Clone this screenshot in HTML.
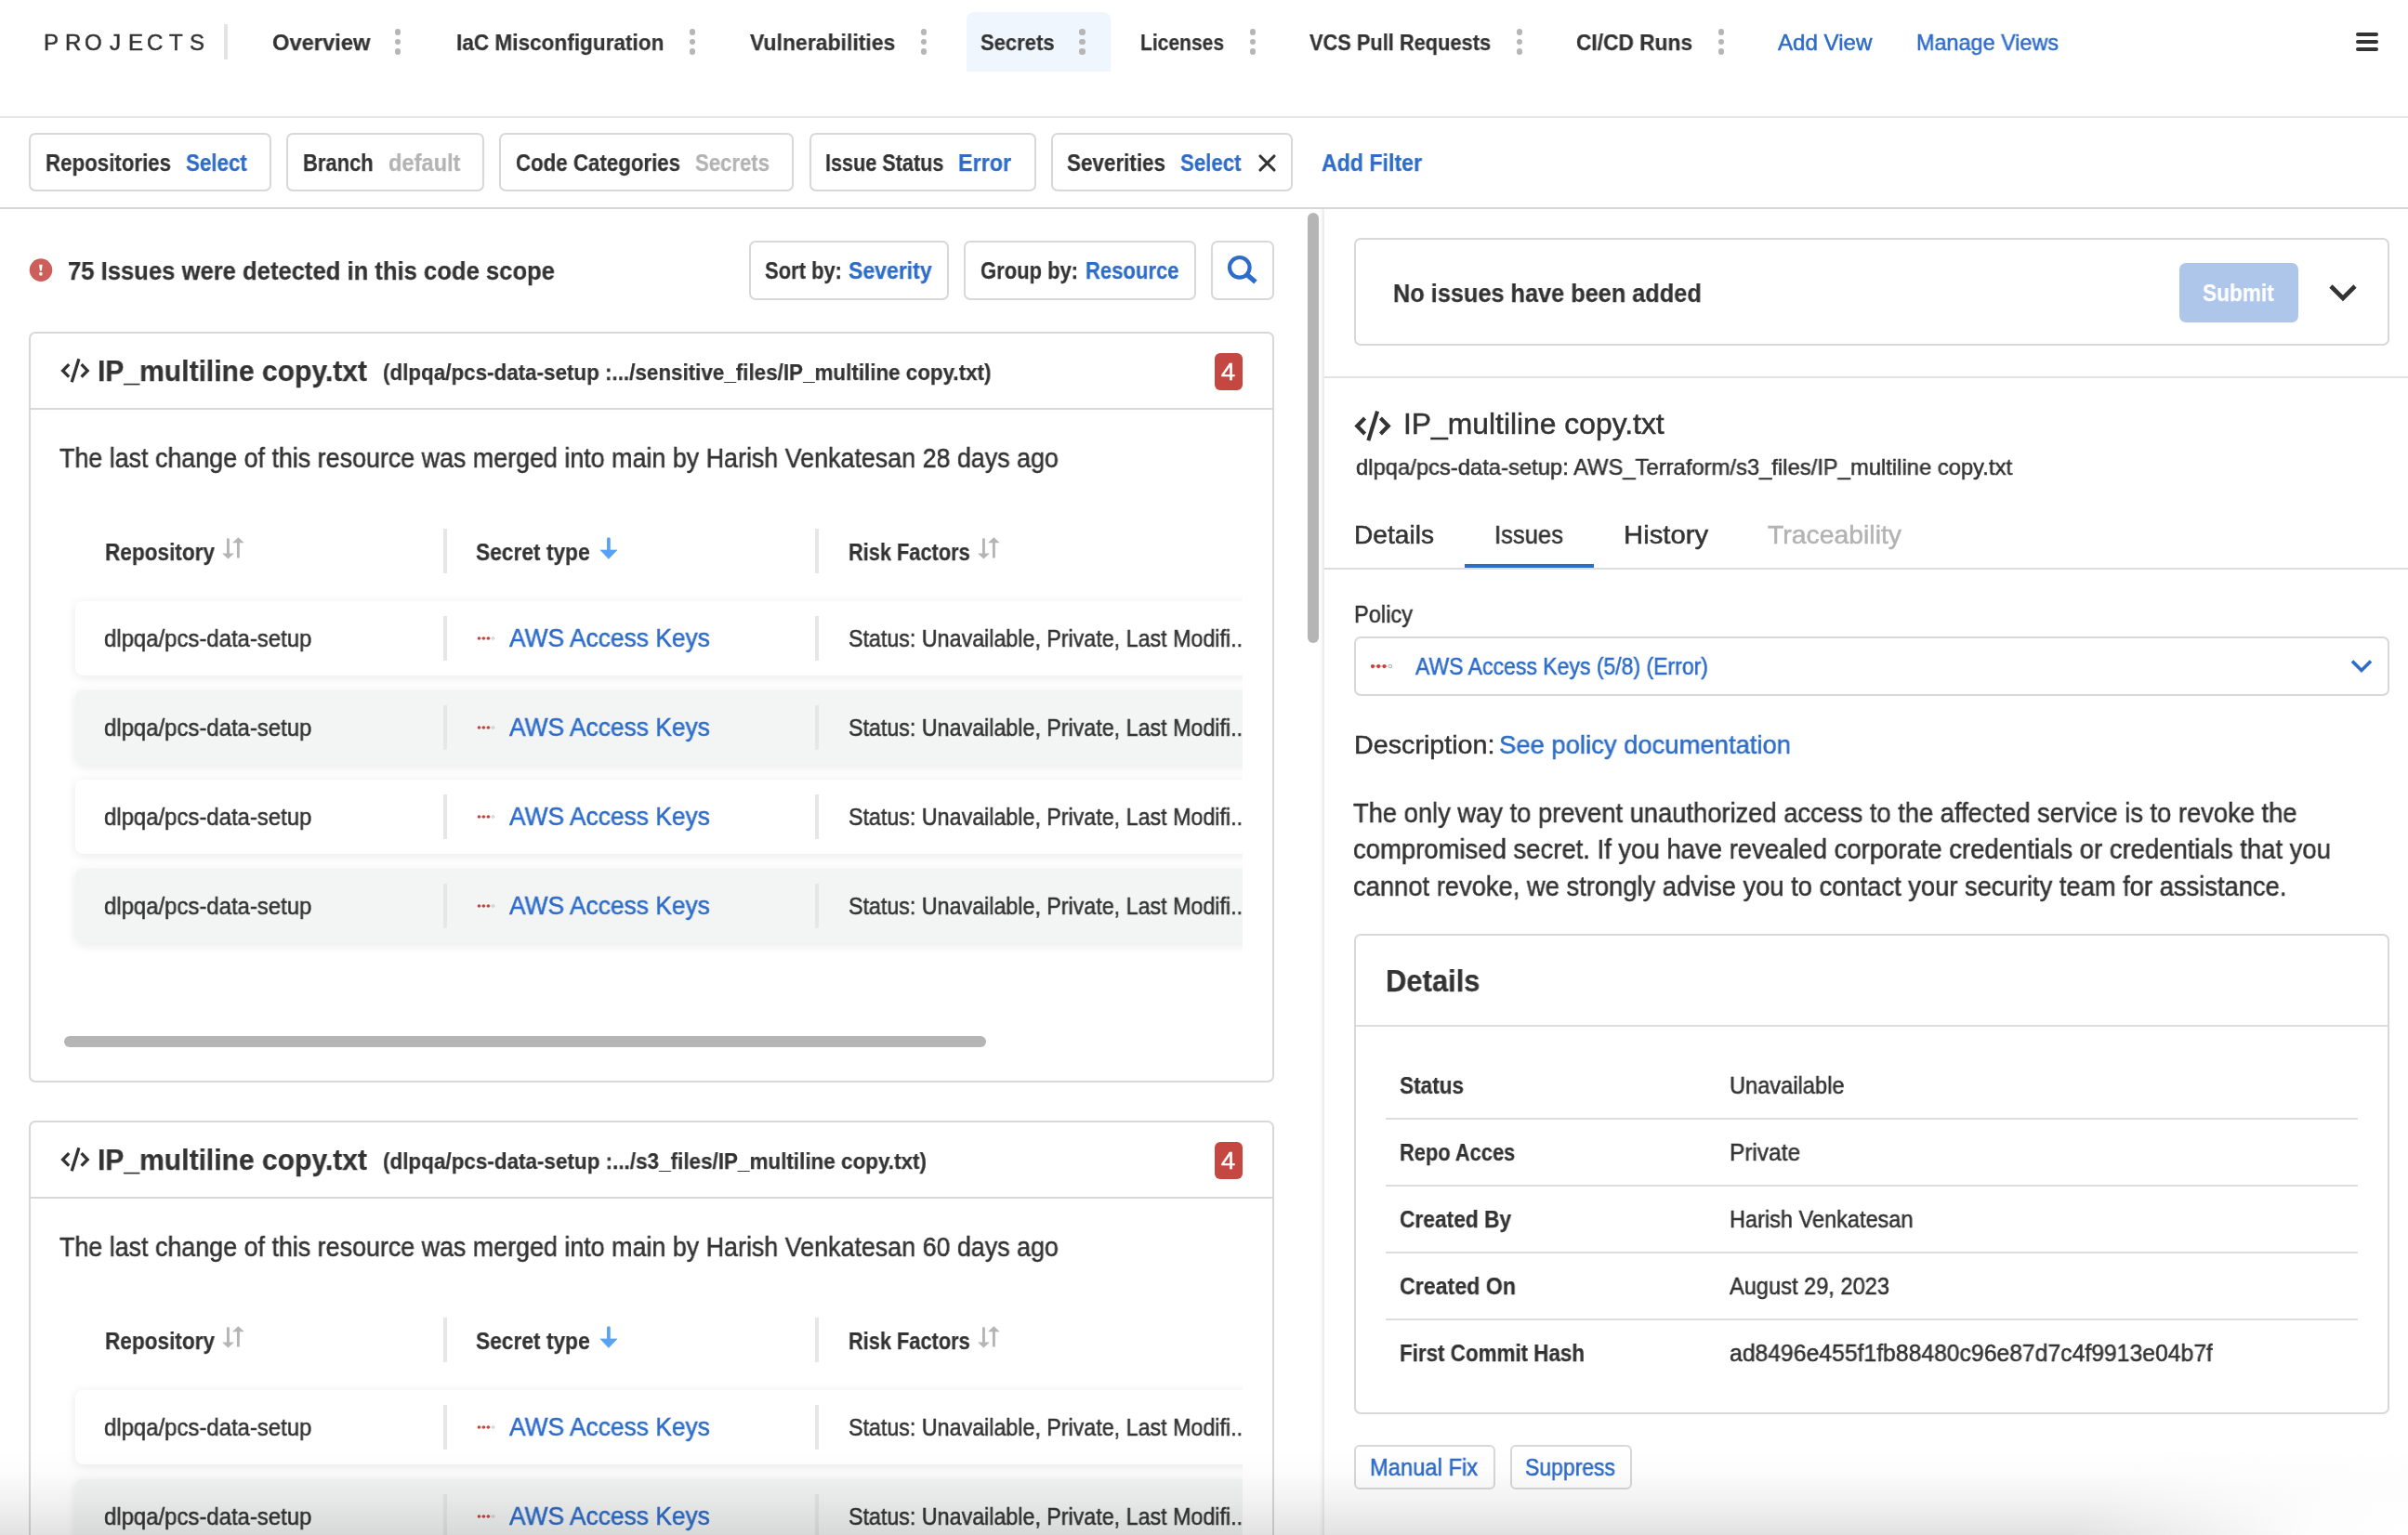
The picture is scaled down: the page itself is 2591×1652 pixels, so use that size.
<!DOCTYPE html>
<html><head><meta charset="utf-8"><title>Secrets</title>
<style>
html,body{margin:0;padding:0;background:#fff;}
body{width:2591px;height:1652px;position:relative;overflow:hidden;font-family:"Liberation Sans",sans-serif;}
.t{position:absolute;white-space:nowrap;line-height:1;transform-origin:0 0;will-change:transform;}
.b{position:absolute;}
svg.b{overflow:visible;}
</style></head><body>
<div class="b" style="left:1040px;top:13px;width:155px;height:64px;background:#f0f6fd;border-radius:8px 8px 0 0;"></div>
<div class="t" style="left:47.40px;top:33.68px;font-size:24px;color:#333333;-webkit-text-stroke:0.5px #333333;">P</div>
<div class="t" style="left:69.80px;top:33.68px;font-size:24px;color:#333333;-webkit-text-stroke:0.5px #333333;">R</div>
<div class="t" style="left:91.30px;top:33.68px;font-size:24px;color:#333333;-webkit-text-stroke:0.5px #333333;">O</div>
<div class="t" style="left:117.80px;top:33.68px;font-size:24px;color:#333333;-webkit-text-stroke:0.5px #333333;">J</div>
<div class="t" style="left:137.50px;top:33.68px;font-size:24px;color:#333333;-webkit-text-stroke:0.5px #333333;">E</div>
<div class="t" style="left:158.10px;top:33.68px;font-size:24px;color:#333333;-webkit-text-stroke:0.5px #333333;">C</div>
<div class="t" style="left:181.50px;top:33.68px;font-size:24px;color:#333333;-webkit-text-stroke:0.5px #333333;">T</div>
<div class="t" style="left:203.80px;top:33.68px;font-size:24px;color:#333333;-webkit-text-stroke:0.5px #333333;">S</div>
<div class="b" style="left:241px;top:26px;width:4px;height:38px;background:#e4e4e4;"></div>
<div class="t" style="left:292.50px;top:33.68px;font-size:24px;color:#333333;font-weight:700;-webkit-text-stroke:0.25px #333333;transform:scaleX(0.9878);">Overview</div>
<div class="b" style="left:424.7px;top:31.099999999999998px;width:6.600000000000023px;height:6.599999999999998px;background:#b6b6b6;border-radius:50%;"></div>
<div class="b" style="left:424.7px;top:41.6px;width:6.600000000000023px;height:6.599999999999994px;background:#b6b6b6;border-radius:50%;"></div>
<div class="b" style="left:424.7px;top:52.1px;width:6.600000000000023px;height:6.599999999999994px;background:#b6b6b6;border-radius:50%;"></div>
<div class="t" style="left:490.60px;top:33.68px;font-size:24px;color:#333333;font-weight:700;-webkit-text-stroke:0.25px #333333;transform:scaleX(0.9412);">IaC Misconfiguration</div>
<div class="b" style="left:741.7px;top:31.099999999999998px;width:6.599999999999909px;height:6.599999999999998px;background:#b6b6b6;border-radius:50%;"></div>
<div class="b" style="left:741.7px;top:41.6px;width:6.599999999999909px;height:6.599999999999994px;background:#b6b6b6;border-radius:50%;"></div>
<div class="b" style="left:741.7px;top:52.1px;width:6.599999999999909px;height:6.599999999999994px;background:#b6b6b6;border-radius:50%;"></div>
<div class="t" style="left:806.60px;top:33.68px;font-size:24px;color:#333333;font-weight:700;-webkit-text-stroke:0.25px #333333;transform:scaleX(0.9583);">Vulnerabilities</div>
<div class="b" style="left:990.7px;top:31.099999999999998px;width:6.599999999999909px;height:6.599999999999998px;background:#b6b6b6;border-radius:50%;"></div>
<div class="b" style="left:990.7px;top:41.6px;width:6.599999999999909px;height:6.599999999999994px;background:#b6b6b6;border-radius:50%;"></div>
<div class="b" style="left:990.7px;top:52.1px;width:6.599999999999909px;height:6.599999999999994px;background:#b6b6b6;border-radius:50%;"></div>
<div class="t" style="left:1055.00px;top:33.68px;font-size:24px;color:#333333;font-weight:700;-webkit-text-stroke:0.25px #333333;transform:scaleX(0.9163);">Secrets</div>
<div class="b" style="left:1161.2px;top:31.099999999999998px;width:6.599999999999909px;height:6.599999999999998px;background:#b6b6b6;border-radius:50%;"></div>
<div class="b" style="left:1161.2px;top:41.6px;width:6.599999999999909px;height:6.599999999999994px;background:#b6b6b6;border-radius:50%;"></div>
<div class="b" style="left:1161.2px;top:52.1px;width:6.599999999999909px;height:6.599999999999994px;background:#b6b6b6;border-radius:50%;"></div>
<div class="t" style="left:1227.00px;top:33.68px;font-size:24px;color:#333333;font-weight:700;-webkit-text-stroke:0.25px #333333;transform:scaleX(0.8762);">Licenses</div>
<div class="b" style="left:1344.7px;top:31.099999999999998px;width:6.599999999999909px;height:6.599999999999998px;background:#b6b6b6;border-radius:50%;"></div>
<div class="b" style="left:1344.7px;top:41.6px;width:6.599999999999909px;height:6.599999999999994px;background:#b6b6b6;border-radius:50%;"></div>
<div class="b" style="left:1344.7px;top:52.1px;width:6.599999999999909px;height:6.599999999999994px;background:#b6b6b6;border-radius:50%;"></div>
<div class="t" style="left:1409.00px;top:33.68px;font-size:24px;color:#333333;font-weight:700;-webkit-text-stroke:0.25px #333333;transform:scaleX(0.9083);">VCS Pull Requests</div>
<div class="b" style="left:1631.7px;top:31.099999999999998px;width:6.599999999999909px;height:6.599999999999998px;background:#b6b6b6;border-radius:50%;"></div>
<div class="b" style="left:1631.7px;top:41.6px;width:6.599999999999909px;height:6.599999999999994px;background:#b6b6b6;border-radius:50%;"></div>
<div class="b" style="left:1631.7px;top:52.1px;width:6.599999999999909px;height:6.599999999999994px;background:#b6b6b6;border-radius:50%;"></div>
<div class="t" style="left:1696.00px;top:33.68px;font-size:24px;color:#333333;font-weight:700;-webkit-text-stroke:0.25px #333333;transform:scaleX(0.9470);">CI/CD Runs</div>
<div class="b" style="left:1848.7px;top:31.099999999999998px;width:6.599999999999909px;height:6.599999999999998px;background:#b6b6b6;border-radius:50%;"></div>
<div class="b" style="left:1848.7px;top:41.6px;width:6.599999999999909px;height:6.599999999999994px;background:#b6b6b6;border-radius:50%;"></div>
<div class="b" style="left:1848.7px;top:52.1px;width:6.599999999999909px;height:6.599999999999994px;background:#b6b6b6;border-radius:50%;"></div>
<div class="t" style="left:1913.00px;top:33.68px;font-size:24px;color:#2d6cc8;-webkit-text-stroke:0.5px #2d6cc8;transform:scaleX(1.0046);">Add View</div>
<div class="t" style="left:2062.00px;top:33.68px;font-size:24px;color:#2d6cc8;-webkit-text-stroke:0.5px #2d6cc8;transform:scaleX(0.9748);">Manage Views</div>
<div class="b" style="left:2535px;top:35px;width:24px;height:4px;background:#333;border-radius:2px;"></div>
<div class="b" style="left:2535px;top:43px;width:24px;height:4px;background:#333;border-radius:2px;"></div>
<div class="b" style="left:2535px;top:51px;width:24px;height:4px;background:#333;border-radius:2px;"></div>
<div class="b" style="left:0px;top:125px;width:2591px;height:2px;background:#e6e7e7;"></div>
<div class="b" style="left:31px;top:143px;width:261px;height:63px;border:2px solid #d7d8d8;border-radius:7px;box-sizing:border-box;"></div>
<div class="t" style="left:48.80px;top:163.23px;font-size:25px;color:#333333;font-weight:700;-webkit-text-stroke:0.25px #333333;transform:scaleX(0.8918);">Repositories</div>
<div class="t" style="left:199.60px;top:163.23px;font-size:25px;color:#2d6cc8;font-weight:700;-webkit-text-stroke:0.25px #2d6cc8;transform:scaleX(0.8937);">Select</div>
<div class="b" style="left:308px;top:143px;width:213px;height:63px;border:2px solid #d7d8d8;border-radius:7px;box-sizing:border-box;"></div>
<div class="t" style="left:326.00px;top:163.23px;font-size:25px;color:#333333;font-weight:700;-webkit-text-stroke:0.25px #333333;transform:scaleX(0.8790);">Branch</div>
<div class="t" style="left:417.60px;top:163.23px;font-size:25px;color:#b3b3b3;font-weight:700;-webkit-text-stroke:0.25px #b3b3b3;transform:scaleX(0.9451);">default</div>
<div class="b" style="left:537px;top:143px;width:317px;height:63px;border:2px solid #d7d8d8;border-radius:7px;box-sizing:border-box;"></div>
<div class="t" style="left:555.00px;top:163.23px;font-size:25px;color:#333333;font-weight:700;-webkit-text-stroke:0.25px #333333;transform:scaleX(0.8911);">Code Categories</div>
<div class="t" style="left:748.00px;top:163.23px;font-size:25px;color:#b3b3b3;font-weight:700;-webkit-text-stroke:0.25px #b3b3b3;transform:scaleX(0.8852);">Secrets</div>
<div class="b" style="left:871px;top:143px;width:244px;height:63px;border:2px solid #d7d8d8;border-radius:7px;box-sizing:border-box;"></div>
<div class="t" style="left:888.00px;top:163.23px;font-size:25px;color:#333333;font-weight:700;-webkit-text-stroke:0.25px #333333;transform:scaleX(0.8659);">Issue Status</div>
<div class="t" style="left:1031.00px;top:163.23px;font-size:25px;color:#2d6cc8;font-weight:700;-webkit-text-stroke:0.25px #2d6cc8;transform:scaleX(0.9325);">Error</div>
<div class="b" style="left:1131px;top:143px;width:260px;height:63px;border:2px solid #d7d8d8;border-radius:7px;box-sizing:border-box;"></div>
<div class="t" style="left:1148.00px;top:163.23px;font-size:25px;color:#333333;font-weight:700;-webkit-text-stroke:0.25px #333333;transform:scaleX(0.8974);">Severities</div>
<div class="t" style="left:1270.00px;top:163.23px;font-size:25px;color:#2d6cc8;font-weight:700;-webkit-text-stroke:0.25px #2d6cc8;transform:scaleX(0.8896);">Select</div>
<svg class="b" style="left:1350px;top:162px" width="26" height="26" viewBox="0 0 26 26"><path d="M6 6L21 21M21 6L6 21" stroke="#333" stroke-width="3.1" stroke-linecap="round"/></svg>
<div class="t" style="left:1422.00px;top:163.23px;font-size:25px;color:#2d6cc8;font-weight:700;-webkit-text-stroke:0.25px #2d6cc8;transform:scaleX(0.9260);">Add Filter</div>
<div class="b" style="left:0px;top:223px;width:2591px;height:2px;background:#d5d7d7;"></div>
<svg class="b" style="left:31px;top:278px" width="26" height="26" viewBox="0 0 26 26"><circle cx="13" cy="12.6" r="12.3" fill="#cd5f5a"/><path d="M11.2 6.8h3.4l-0.7 6.8h-2z" fill="#fff"/><rect x="11.3" y="15" width="3.2" height="3.6" rx="0.8" fill="#fff"/></svg>
<div class="t" style="left:72.50px;top:278.29px;font-size:28px;color:#333333;font-weight:700;-webkit-text-stroke:0.25px #333333;transform:scaleX(0.9149);">75 Issues were detected in this code scope</div>
<div class="b" style="left:806px;top:259px;width:215px;height:64px;border:2px solid #d7d8d8;border-radius:7px;box-sizing:border-box;"></div>
<div class="t" style="left:823.00px;top:278.83px;font-size:25px;color:#333333;font-weight:700;-webkit-text-stroke:0.25px #333333;transform:scaleX(0.8783);">Sort by:</div>
<div class="t" style="left:913.00px;top:278.83px;font-size:25px;color:#2d6cc8;font-weight:700;-webkit-text-stroke:0.25px #2d6cc8;transform:scaleX(0.9213);">Severity</div>
<div class="b" style="left:1037px;top:259px;width:250px;height:64px;border:2px solid #d7d8d8;border-radius:7px;box-sizing:border-box;"></div>
<div class="t" style="left:1054.50px;top:278.83px;font-size:25px;color:#333333;font-weight:700;-webkit-text-stroke:0.25px #333333;transform:scaleX(0.8796);">Group by:</div>
<div class="t" style="left:1168.00px;top:278.83px;font-size:25px;color:#2d6cc8;font-weight:700;-webkit-text-stroke:0.25px #2d6cc8;transform:scaleX(0.8816);">Resource</div>
<div class="b" style="left:1303px;top:259px;width:68px;height:64px;border:2px solid #d7d8d8;border-radius:7px;box-sizing:border-box;"></div>
<svg class="b" style="left:1316px;top:270px" width="42" height="42" viewBox="0 0 42 42"><circle cx="17.8" cy="17.8" r="10.8" fill="none" stroke="#2d6cc8" stroke-width="4.2"/><path d="M25 25L35 33.5" stroke="#2d6cc8" stroke-width="5.2" stroke-linecap="butt"/></svg>
<div class="b" style="left:31px;top:357px;width:1340px;height:808px;border:2px solid #d7d8d8;border-radius:7px;box-sizing:border-box;"></div>
<svg class="b" style="left:65px;top:385px" width="34.0" height="30.0" viewBox="0 0 34 30"><path d="M9.2 7.2L2.6 13.9L9.2 20.6M22.6 7.2L29.2 13.9L22.6 20.6" fill="none" stroke="#333" stroke-width="3.3" stroke-linecap="butt" stroke-linejoin="miter"/><path d="M19.9 1.2L12.2 26.3" stroke="#333" stroke-width="3.3"/></svg>
<div class="t" style="left:105.00px;top:383.75px;font-size:31px;color:#333333;font-weight:700;-webkit-text-stroke:0.25px #333333;transform:scaleX(0.9694);">IP_multiline copy.txt</div>
<div class="t" style="left:412.00px;top:388.68px;font-size:24px;color:#333333;font-weight:700;-webkit-text-stroke:0.25px #333333;transform:scaleX(0.9336);">(dlpqa/pcs-data-setup :.../sensitive_files/IP_multiline copy.txt)</div>
<div class="b" style="left:1307px;top:380px;width:30px;height:40px;background:#c44741;border-radius:6px;"></div>
<div class="t" style="left:1314.00px;top:387.83px;font-size:25px;color:#ffffff;-webkit-text-stroke:0.5px #ffffff;transform:scaleX(1.0811);">4</div>
<div class="b" style="left:33px;top:439px;width:1336px;height:2px;background:#d7d8d8;"></div>
<div class="t" style="left:64.40px;top:479.45px;font-size:29px;color:#333333;-webkit-text-stroke:0.5px #333333;transform:scaleX(0.9261);">The last change of this resource was merged into main by Harish Venkatesan 28 days ago</div>
<div class="t" style="left:113.00px;top:581.63px;font-size:25px;color:#333333;font-weight:700;-webkit-text-stroke:0.25px #333333;transform:scaleX(0.9033);">Repository</div>
<svg class="b" style="left:238px;top:577px" width="28" height="28" viewBox="0 0 28 28"><path d="M7.45 2.4V19" stroke="#b5b5b5" stroke-width="2.9"/><path d="M1 18.5H13.9L7.45 24.6z" fill="#b5b5b5"/><path d="M18.4 7V23.5" stroke="#b5b5b5" stroke-width="2.9"/><path d="M12 7.3H24.7L18.35 1.3z" fill="#b5b5b5"/></svg>
<div class="b" style="left:477px;top:569px;width:4px;height:48px;background:#e6e6e6;"></div>
<div class="t" style="left:512.00px;top:581.63px;font-size:25px;color:#333333;font-weight:700;-webkit-text-stroke:0.25px #333333;transform:scaleX(0.9098);">Secret type</div>
<svg class="b" style="left:645px;top:578px" width="22" height="26" viewBox="0 0 22 26"><path d="M9.9 2.2V15" stroke="#58a2f4" stroke-width="3.7" stroke-linecap="round"/><path d="M0.9 13.9H19L9.9 23.6z" fill="#58a2f4" stroke="#58a2f4" stroke-width="0.6" stroke-linejoin="round"/></svg>
<div class="b" style="left:877px;top:569px;width:4px;height:48px;background:#e6e6e6;"></div>
<div class="t" style="left:912.60px;top:581.63px;font-size:25px;color:#333333;font-weight:700;-webkit-text-stroke:0.25px #333333;transform:scaleX(0.8706);">Risk Factors</div>
<svg class="b" style="left:1051px;top:577px" width="28" height="28" viewBox="0 0 28 28"><path d="M7.45 2.4V19" stroke="#b5b5b5" stroke-width="2.9"/><path d="M1 18.5H13.9L7.45 24.6z" fill="#b5b5b5"/><path d="M18.4 7V23.5" stroke="#b5b5b5" stroke-width="2.9"/><path d="M12 7.3H24.7L18.35 1.3z" fill="#b5b5b5"/></svg>
<div class="b" style="left:60px;top:630px;width:1277px;height:420px;overflow:hidden;">
<div class="b" style="left:21px;top:17px;width:1300px;height:80px;background:#ffffff;border-radius:8px;box-shadow:0 2px 12px rgba(0,0,0,0.09);"></div>
<div class="b" style="left:21px;top:113px;width:1300px;height:80px;background:#f3f4f4;border-radius:8px;box-shadow:0 2px 12px rgba(0,0,0,0.09);"></div>
<div class="b" style="left:21px;top:209px;width:1300px;height:80px;background:#ffffff;border-radius:8px;box-shadow:0 2px 12px rgba(0,0,0,0.09);"></div>
<div class="b" style="left:21px;top:305px;width:1300px;height:80px;background:#f3f4f4;border-radius:8px;box-shadow:0 2px 12px rgba(0,0,0,0.09);"></div>
</div>
<div class="t" style="left:112.40px;top:674.83px;font-size:25px;color:#333333;-webkit-text-stroke:0.5px #333333;transform:scaleX(0.9567);">dlpqa/pcs-data-setup</div>
<div class="b" style="left:477px;top:663px;width:4px;height:48px;background:#e6e6e6;"></div>
<svg class="b" style="left:513px;top:683.00px" width="22.0" height="8.0" viewBox="0 0 22 8"><path d="M2.4 4H15" stroke="#e9b5b0" stroke-width="1.2"/><circle cx="2.4" cy="4" r="1.7" fill="#c3433b"/><circle cx="7.4" cy="4" r="1.7" fill="#c3433b"/><circle cx="12.4" cy="4" r="1.7" fill="#c3433b"/><circle cx="17.5" cy="4" r="1.35" fill="none" stroke="#b8b8b8" stroke-width="0.9"/></svg>
<div class="t" style="left:548.40px;top:674.14px;font-size:27px;color:#2d6cc8;-webkit-text-stroke:0.5px #2d6cc8;transform:scaleX(0.9768);">AWS Access Keys</div>
<div class="b" style="left:877px;top:663px;width:4px;height:48px;background:#e6e6e6;"></div>
<div class="t" style="left:912.60px;top:674.83px;font-size:25px;color:#333333;-webkit-text-stroke:0.5px #333333;transform:scaleX(0.9303);">Status: Unavailable, Private, Last Modifi..</div>
<div class="t" style="left:112.40px;top:770.83px;font-size:25px;color:#333333;-webkit-text-stroke:0.5px #333333;transform:scaleX(0.9567);">dlpqa/pcs-data-setup</div>
<div class="b" style="left:477px;top:759px;width:4px;height:48px;background:#e6e6e6;"></div>
<svg class="b" style="left:513px;top:779.00px" width="22.0" height="8.0" viewBox="0 0 22 8"><path d="M2.4 4H15" stroke="#e9b5b0" stroke-width="1.2"/><circle cx="2.4" cy="4" r="1.7" fill="#c3433b"/><circle cx="7.4" cy="4" r="1.7" fill="#c3433b"/><circle cx="12.4" cy="4" r="1.7" fill="#c3433b"/><circle cx="17.5" cy="4" r="1.35" fill="none" stroke="#b8b8b8" stroke-width="0.9"/></svg>
<div class="t" style="left:548.40px;top:770.14px;font-size:27px;color:#2d6cc8;-webkit-text-stroke:0.5px #2d6cc8;transform:scaleX(0.9768);">AWS Access Keys</div>
<div class="b" style="left:877px;top:759px;width:4px;height:48px;background:#e6e6e6;"></div>
<div class="t" style="left:912.60px;top:770.83px;font-size:25px;color:#333333;-webkit-text-stroke:0.5px #333333;transform:scaleX(0.9303);">Status: Unavailable, Private, Last Modifi..</div>
<div class="t" style="left:112.40px;top:866.83px;font-size:25px;color:#333333;-webkit-text-stroke:0.5px #333333;transform:scaleX(0.9567);">dlpqa/pcs-data-setup</div>
<div class="b" style="left:477px;top:855px;width:4px;height:48px;background:#e6e6e6;"></div>
<svg class="b" style="left:513px;top:875.00px" width="22.0" height="8.0" viewBox="0 0 22 8"><path d="M2.4 4H15" stroke="#e9b5b0" stroke-width="1.2"/><circle cx="2.4" cy="4" r="1.7" fill="#c3433b"/><circle cx="7.4" cy="4" r="1.7" fill="#c3433b"/><circle cx="12.4" cy="4" r="1.7" fill="#c3433b"/><circle cx="17.5" cy="4" r="1.35" fill="none" stroke="#b8b8b8" stroke-width="0.9"/></svg>
<div class="t" style="left:548.40px;top:866.14px;font-size:27px;color:#2d6cc8;-webkit-text-stroke:0.5px #2d6cc8;transform:scaleX(0.9768);">AWS Access Keys</div>
<div class="b" style="left:877px;top:855px;width:4px;height:48px;background:#e6e6e6;"></div>
<div class="t" style="left:912.60px;top:866.83px;font-size:25px;color:#333333;-webkit-text-stroke:0.5px #333333;transform:scaleX(0.9303);">Status: Unavailable, Private, Last Modifi..</div>
<div class="t" style="left:112.40px;top:962.83px;font-size:25px;color:#333333;-webkit-text-stroke:0.5px #333333;transform:scaleX(0.9567);">dlpqa/pcs-data-setup</div>
<div class="b" style="left:477px;top:951px;width:4px;height:48px;background:#e6e6e6;"></div>
<svg class="b" style="left:513px;top:971.00px" width="22.0" height="8.0" viewBox="0 0 22 8"><path d="M2.4 4H15" stroke="#e9b5b0" stroke-width="1.2"/><circle cx="2.4" cy="4" r="1.7" fill="#c3433b"/><circle cx="7.4" cy="4" r="1.7" fill="#c3433b"/><circle cx="12.4" cy="4" r="1.7" fill="#c3433b"/><circle cx="17.5" cy="4" r="1.35" fill="none" stroke="#b8b8b8" stroke-width="0.9"/></svg>
<div class="t" style="left:548.40px;top:962.14px;font-size:27px;color:#2d6cc8;-webkit-text-stroke:0.5px #2d6cc8;transform:scaleX(0.9768);">AWS Access Keys</div>
<div class="b" style="left:877px;top:951px;width:4px;height:48px;background:#e6e6e6;"></div>
<div class="t" style="left:912.60px;top:962.83px;font-size:25px;color:#333333;-webkit-text-stroke:0.5px #333333;transform:scaleX(0.9303);">Status: Unavailable, Private, Last Modifi..</div>
<div class="b" style="left:69px;top:1115px;width:992px;height:12px;background:#b5b5b5;border-radius:6px;"></div>
<div class="b" style="left:31px;top:1206px;width:1340px;height:1194px;border:2px solid #d7d8d8;border-radius:7px;box-sizing:border-box;"></div>
<svg class="b" style="left:65px;top:1234px" width="34.0" height="30.0" viewBox="0 0 34 30"><path d="M9.2 7.2L2.6 13.9L9.2 20.6M22.6 7.2L29.2 13.9L22.6 20.6" fill="none" stroke="#333" stroke-width="3.3" stroke-linecap="butt" stroke-linejoin="miter"/><path d="M19.9 1.2L12.2 26.3" stroke="#333" stroke-width="3.3"/></svg>
<div class="t" style="left:105.00px;top:1232.75px;font-size:31px;color:#333333;font-weight:700;-webkit-text-stroke:0.25px #333333;transform:scaleX(0.9694);">IP_multiline copy.txt</div>
<div class="t" style="left:412.00px;top:1237.68px;font-size:24px;color:#333333;font-weight:700;-webkit-text-stroke:0.25px #333333;transform:scaleX(0.9359);">(dlpqa/pcs-data-setup :.../s3_files/IP_multiline copy.txt)</div>
<div class="b" style="left:1307px;top:1229px;width:30px;height:40px;background:#c44741;border-radius:6px;"></div>
<div class="t" style="left:1314.00px;top:1236.83px;font-size:25px;color:#ffffff;-webkit-text-stroke:0.5px #ffffff;transform:scaleX(1.0811);">4</div>
<div class="b" style="left:33px;top:1288px;width:1336px;height:2px;background:#d7d8d8;"></div>
<div class="t" style="left:64.40px;top:1328.45px;font-size:29px;color:#333333;-webkit-text-stroke:0.5px #333333;transform:scaleX(0.9261);">The last change of this resource was merged into main by Harish Venkatesan 60 days ago</div>
<div class="t" style="left:113.00px;top:1430.63px;font-size:25px;color:#333333;font-weight:700;-webkit-text-stroke:0.25px #333333;transform:scaleX(0.9033);">Repository</div>
<svg class="b" style="left:238px;top:1426px" width="28" height="28" viewBox="0 0 28 28"><path d="M7.45 2.4V19" stroke="#b5b5b5" stroke-width="2.9"/><path d="M1 18.5H13.9L7.45 24.6z" fill="#b5b5b5"/><path d="M18.4 7V23.5" stroke="#b5b5b5" stroke-width="2.9"/><path d="M12 7.3H24.7L18.35 1.3z" fill="#b5b5b5"/></svg>
<div class="b" style="left:477px;top:1418px;width:4px;height:48px;background:#e6e6e6;"></div>
<div class="t" style="left:512.00px;top:1430.63px;font-size:25px;color:#333333;font-weight:700;-webkit-text-stroke:0.25px #333333;transform:scaleX(0.9098);">Secret type</div>
<svg class="b" style="left:645px;top:1427px" width="22" height="26" viewBox="0 0 22 26"><path d="M9.9 2.2V15" stroke="#58a2f4" stroke-width="3.7" stroke-linecap="round"/><path d="M0.9 13.9H19L9.9 23.6z" fill="#58a2f4" stroke="#58a2f4" stroke-width="0.6" stroke-linejoin="round"/></svg>
<div class="b" style="left:877px;top:1418px;width:4px;height:48px;background:#e6e6e6;"></div>
<div class="t" style="left:912.60px;top:1430.63px;font-size:25px;color:#333333;font-weight:700;-webkit-text-stroke:0.25px #333333;transform:scaleX(0.8706);">Risk Factors</div>
<svg class="b" style="left:1051px;top:1426px" width="28" height="28" viewBox="0 0 28 28"><path d="M7.45 2.4V19" stroke="#b5b5b5" stroke-width="2.9"/><path d="M1 18.5H13.9L7.45 24.6z" fill="#b5b5b5"/><path d="M18.4 7V23.5" stroke="#b5b5b5" stroke-width="2.9"/><path d="M12 7.3H24.7L18.35 1.3z" fill="#b5b5b5"/></svg>
<div class="b" style="left:60px;top:1479px;width:1277px;height:420px;overflow:hidden;">
<div class="b" style="left:21px;top:17px;width:1300px;height:80px;background:#ffffff;border-radius:8px;box-shadow:0 2px 12px rgba(0,0,0,0.09);"></div>
<div class="b" style="left:21px;top:113px;width:1300px;height:80px;background:#f3f4f4;border-radius:8px;box-shadow:0 2px 12px rgba(0,0,0,0.09);"></div>
<div class="b" style="left:21px;top:209px;width:1300px;height:80px;background:#ffffff;border-radius:8px;box-shadow:0 2px 12px rgba(0,0,0,0.09);"></div>
<div class="b" style="left:21px;top:305px;width:1300px;height:80px;background:#f3f4f4;border-radius:8px;box-shadow:0 2px 12px rgba(0,0,0,0.09);"></div>
</div>
<div class="t" style="left:112.40px;top:1523.83px;font-size:25px;color:#333333;-webkit-text-stroke:0.5px #333333;transform:scaleX(0.9567);">dlpqa/pcs-data-setup</div>
<div class="b" style="left:477px;top:1512px;width:4px;height:48px;background:#e6e6e6;"></div>
<svg class="b" style="left:513px;top:1532.00px" width="22.0" height="8.0" viewBox="0 0 22 8"><path d="M2.4 4H15" stroke="#e9b5b0" stroke-width="1.2"/><circle cx="2.4" cy="4" r="1.7" fill="#c3433b"/><circle cx="7.4" cy="4" r="1.7" fill="#c3433b"/><circle cx="12.4" cy="4" r="1.7" fill="#c3433b"/><circle cx="17.5" cy="4" r="1.35" fill="none" stroke="#b8b8b8" stroke-width="0.9"/></svg>
<div class="t" style="left:548.40px;top:1523.14px;font-size:27px;color:#2d6cc8;-webkit-text-stroke:0.5px #2d6cc8;transform:scaleX(0.9768);">AWS Access Keys</div>
<div class="b" style="left:877px;top:1512px;width:4px;height:48px;background:#e6e6e6;"></div>
<div class="t" style="left:912.60px;top:1523.83px;font-size:25px;color:#333333;-webkit-text-stroke:0.5px #333333;transform:scaleX(0.9303);">Status: Unavailable, Private, Last Modifi..</div>
<div class="t" style="left:112.40px;top:1619.83px;font-size:25px;color:#333333;-webkit-text-stroke:0.5px #333333;transform:scaleX(0.9567);">dlpqa/pcs-data-setup</div>
<div class="b" style="left:477px;top:1608px;width:4px;height:48px;background:#e6e6e6;"></div>
<svg class="b" style="left:513px;top:1628.00px" width="22.0" height="8.0" viewBox="0 0 22 8"><path d="M2.4 4H15" stroke="#e9b5b0" stroke-width="1.2"/><circle cx="2.4" cy="4" r="1.7" fill="#c3433b"/><circle cx="7.4" cy="4" r="1.7" fill="#c3433b"/><circle cx="12.4" cy="4" r="1.7" fill="#c3433b"/><circle cx="17.5" cy="4" r="1.35" fill="none" stroke="#b8b8b8" stroke-width="0.9"/></svg>
<div class="t" style="left:548.40px;top:1619.14px;font-size:27px;color:#2d6cc8;-webkit-text-stroke:0.5px #2d6cc8;transform:scaleX(0.9768);">AWS Access Keys</div>
<div class="b" style="left:877px;top:1608px;width:4px;height:48px;background:#e6e6e6;"></div>
<div class="t" style="left:912.60px;top:1619.83px;font-size:25px;color:#333333;-webkit-text-stroke:0.5px #333333;transform:scaleX(0.9303);">Status: Unavailable, Private, Last Modifi..</div>
<div class="t" style="left:112.40px;top:1715.83px;font-size:25px;color:#333333;-webkit-text-stroke:0.5px #333333;transform:scaleX(0.9567);">dlpqa/pcs-data-setup</div>
<div class="b" style="left:477px;top:1704px;width:4px;height:48px;background:#e6e6e6;"></div>
<svg class="b" style="left:513px;top:1724.00px" width="22.0" height="8.0" viewBox="0 0 22 8"><path d="M2.4 4H15" stroke="#e9b5b0" stroke-width="1.2"/><circle cx="2.4" cy="4" r="1.7" fill="#c3433b"/><circle cx="7.4" cy="4" r="1.7" fill="#c3433b"/><circle cx="12.4" cy="4" r="1.7" fill="#c3433b"/><circle cx="17.5" cy="4" r="1.35" fill="none" stroke="#b8b8b8" stroke-width="0.9"/></svg>
<div class="t" style="left:548.40px;top:1715.14px;font-size:27px;color:#2d6cc8;-webkit-text-stroke:0.5px #2d6cc8;transform:scaleX(0.9768);">AWS Access Keys</div>
<div class="b" style="left:877px;top:1704px;width:4px;height:48px;background:#e6e6e6;"></div>
<div class="t" style="left:912.60px;top:1715.83px;font-size:25px;color:#333333;-webkit-text-stroke:0.5px #333333;transform:scaleX(0.9303);">Status: Unavailable, Private, Last Modifi..</div>
<div class="b" style="left:1407px;top:229px;width:12px;height:463px;background:#b5b5b5;border-radius:6px;"></div>
<div class="b" style="left:1419px;top:225px;width:4px;height:1427px;background:linear-gradient(to right,rgba(0,0,0,0),rgba(0,0,0,0.035));"></div>
<div class="b" style="left:1423px;top:225px;width:2px;height:1427px;background:#ecedee;"></div>
<div class="b" style="left:1457px;top:256px;width:1114px;height:116px;border:2px solid #d7d8d8;border-radius:7px;box-sizing:border-box;"></div>
<div class="t" style="left:1498.70px;top:302.29px;font-size:28px;color:#333333;font-weight:700;-webkit-text-stroke:0.25px #333333;transform:scaleX(0.9033);">No issues have been added</div>
<div class="b" style="left:2345px;top:283px;width:128px;height:64px;background:#adc6ea;border-radius:7px;"></div>
<div class="t" style="left:2370.00px;top:302.83px;font-size:25px;color:#ffffff;font-weight:700;-webkit-text-stroke:0.25px #ffffff;transform:scaleX(0.9050);">Submit</div>
<svg class="b" style="left:2502px;top:300px" width="38" height="30" viewBox="0 0 38 30"><path d="M6 8L19 21L32 8" fill="none" stroke="#333" stroke-width="4.6" stroke-linecap="butt"/></svg>
<div class="b" style="left:1425px;top:405px;width:1166px;height:2px;background:#e2e3e3;"></div>
<svg class="b" style="left:1457px;top:441px" width="42.8" height="37.8" viewBox="0 0 34 30"><path d="M9.2 7.2L2.6 13.9L9.2 20.6M22.6 7.2L29.2 13.9L22.6 20.6" fill="none" stroke="#333" stroke-width="3.3" stroke-linecap="butt" stroke-linejoin="miter"/><path d="M19.9 1.2L12.2 26.3" stroke="#333" stroke-width="3.3"/></svg>
<div class="t" style="left:1510.00px;top:441.15px;font-size:31px;color:#333333;-webkit-text-stroke:0.5px #333333;transform:scaleX(1.0266);">IP_multiline copy.txt</div>
<div class="t" style="left:1458.80px;top:491.18px;font-size:24px;color:#333333;-webkit-text-stroke:0.5px #333333;transform:scaleX(0.9911);">dlpqa/pcs-data-setup: AWS_Terraform/s3_files/IP_multiline copy.txt</div>
<div class="t" style="left:1457.00px;top:562.29px;font-size:28px;color:#333333;-webkit-text-stroke:0.5px #333333;transform:scaleX(1.0054);">Details</div>
<div class="t" style="left:1608.00px;top:562.29px;font-size:28px;color:#333333;-webkit-text-stroke:0.5px #333333;transform:scaleX(0.9145);">Issues</div>
<div class="t" style="left:1747.00px;top:562.29px;font-size:28px;color:#333333;-webkit-text-stroke:0.5px #333333;transform:scaleX(1.0450);">History</div>
<div class="t" style="left:1902.00px;top:562.29px;font-size:28px;color:#b3b3b3;-webkit-text-stroke:0.5px #b3b3b3;transform:scaleX(1.0134);">Traceability</div>
<div class="b" style="left:1425px;top:611px;width:1166px;height:2px;background:#dcdddd;"></div>
<div class="b" style="left:1576px;top:607px;width:139px;height:4px;background:#2d6cc8;"></div>
<div class="t" style="left:1457.00px;top:649.43px;font-size:25px;color:#333333;-webkit-text-stroke:0.5px #333333;transform:scaleX(0.9438);">Policy</div>
<div class="b" style="left:1457px;top:685px;width:1114px;height:64px;border:2px solid #d7d8d8;border-radius:7px;box-sizing:border-box;"></div>
<svg class="b" style="left:1473.5px;top:712.00px" width="27.5" height="10.0" viewBox="0 0 22 8"><path d="M2.4 4H15" stroke="#e9b5b0" stroke-width="1.2"/><circle cx="2.4" cy="4" r="1.7" fill="#c3433b"/><circle cx="7.4" cy="4" r="1.7" fill="#c3433b"/><circle cx="12.4" cy="4" r="1.7" fill="#c3433b"/><circle cx="17.5" cy="4" r="1.35" fill="none" stroke="#b8b8b8" stroke-width="0.9"/></svg>
<div class="t" style="left:1522.50px;top:705.23px;font-size:25px;color:#2d6cc8;-webkit-text-stroke:0.5px #2d6cc8;transform:scaleX(0.9204);">AWS Access Keys (5/8) (Error)</div>
<svg class="b" style="left:2526px;top:704px" width="30" height="24" viewBox="0 0 30 24"><path d="M5 7.5L15 17.5L25 7.5" fill="none" stroke="#2d6cc8" stroke-width="3.6"/></svg>
<div class="t" style="left:1457.00px;top:787.89px;font-size:28px;color:#333333;-webkit-text-stroke:0.5px #333333;transform:scaleX(1.0248);">Description:</div>
<div class="t" style="left:1612.70px;top:787.89px;font-size:28px;color:#2d6cc8;-webkit-text-stroke:0.5px #2d6cc8;transform:scaleX(0.9794);">See policy documentation</div>
<div class="t" style="left:1456.40px;top:860.95px;font-size:29px;color:#333333;-webkit-text-stroke:0.5px #333333;transform:scaleX(0.9421);">The only way to prevent unauthorized access to the affected service is to revoke the</div>
<div class="t" style="left:1456.40px;top:900.45px;font-size:29px;color:#333333;-webkit-text-stroke:0.5px #333333;transform:scaleX(0.9472);">compromised secret. If you have revealed corporate credentials or credentials that you</div>
<div class="t" style="left:1456.40px;top:940.05px;font-size:29px;color:#333333;-webkit-text-stroke:0.5px #333333;transform:scaleX(0.9427);">cannot revoke, we strongly advise you to contact your security team for assistance.</div>
<div class="b" style="left:1457px;top:1005px;width:1114px;height:517px;border:2px solid #d7d8d8;border-radius:7px;box-sizing:border-box;"></div>
<div class="t" style="left:1490.50px;top:1038.86px;font-size:33px;color:#333333;font-weight:700;-webkit-text-stroke:0.25px #333333;transform:scaleX(0.9377);">Details</div>
<div class="b" style="left:1459px;top:1103px;width:1110px;height:2px;background:#dcdddd;"></div>
<div class="t" style="left:1506.00px;top:1156.43px;font-size:25px;color:#333333;font-weight:700;-webkit-text-stroke:0.25px #333333;transform:scaleX(0.9034);">Status</div>
<div class="t" style="left:1860.60px;top:1156.43px;font-size:25px;color:#333333;-webkit-text-stroke:0.5px #333333;transform:scaleX(0.9455);">Unavailable</div>
<div class="b" style="left:1491px;top:1203px;width:1046px;height:2px;background:#dcdddd;"></div>
<div class="t" style="left:1506.00px;top:1228.33px;font-size:25px;color:#333333;font-weight:700;-webkit-text-stroke:0.25px #333333;transform:scaleX(0.8738);">Repo Acces</div>
<div class="t" style="left:1860.60px;top:1228.33px;font-size:25px;color:#333333;-webkit-text-stroke:0.5px #333333;transform:scaleX(0.9775);">Private</div>
<div class="b" style="left:1491px;top:1275px;width:1046px;height:2px;background:#dcdddd;"></div>
<div class="t" style="left:1506.00px;top:1300.23px;font-size:25px;color:#333333;font-weight:700;-webkit-text-stroke:0.25px #333333;transform:scaleX(0.9106);">Created By</div>
<div class="t" style="left:1860.60px;top:1300.23px;font-size:25px;color:#333333;-webkit-text-stroke:0.5px #333333;transform:scaleX(0.9410);">Harish Venkatesan</div>
<div class="b" style="left:1491px;top:1347px;width:1046px;height:2px;background:#dcdddd;"></div>
<div class="t" style="left:1506.00px;top:1372.13px;font-size:25px;color:#333333;font-weight:700;-webkit-text-stroke:0.25px #333333;transform:scaleX(0.9276);">Created On</div>
<div class="t" style="left:1860.60px;top:1372.13px;font-size:25px;color:#333333;-webkit-text-stroke:0.5px #333333;transform:scaleX(0.9444);">August 29, 2023</div>
<div class="b" style="left:1491px;top:1419px;width:1046px;height:2px;background:#dcdddd;"></div>
<div class="t" style="left:1506.00px;top:1444.03px;font-size:25px;color:#333333;font-weight:700;-webkit-text-stroke:0.25px #333333;transform:scaleX(0.8954);">First Commit Hash</div>
<div class="t" style="left:1860.60px;top:1444.03px;font-size:25px;color:#333333;-webkit-text-stroke:0.5px #333333;transform:scaleX(0.9893);">ad8496e455f1fb88480c96e87d7c4f9913e04b7f</div>
<div class="b" style="left:1457px;top:1555px;width:152px;height:48px;border:2px solid #d7d8d8;border-radius:6px;box-sizing:border-box;"></div>
<div class="t" style="left:1474.00px;top:1566.83px;font-size:25px;color:#2d6cc8;-webkit-text-stroke:0.5px #2d6cc8;transform:scaleX(0.9489);">Manual Fix</div>
<div class="b" style="left:1625px;top:1555px;width:131px;height:48px;border:2px solid #d7d8d8;border-radius:6px;box-sizing:border-box;"></div>
<div class="t" style="left:1641.00px;top:1566.83px;font-size:25px;color:#2d6cc8;-webkit-text-stroke:0.5px #2d6cc8;transform:scaleX(0.9183);">Suppress</div>
<div class="b" style="left:0px;top:1560px;width:2591px;height:92px;background:linear-gradient(to bottom,rgba(0,0,0,0) 0%,rgba(0,0,0,0.015) 30%,rgba(0,0,0,0.05) 60%,rgba(0,0,0,0.115) 100%);"></div>
<div class="b" style="left:2000px;top:1560px;width:591px;height:92px;background:radial-gradient(ellipse 360px 130px at 100% 100%,rgba(255,255,255,1) 0%,rgba(255,255,255,0.9) 30%,rgba(255,255,255,0) 100%);"></div>
</body></html>
